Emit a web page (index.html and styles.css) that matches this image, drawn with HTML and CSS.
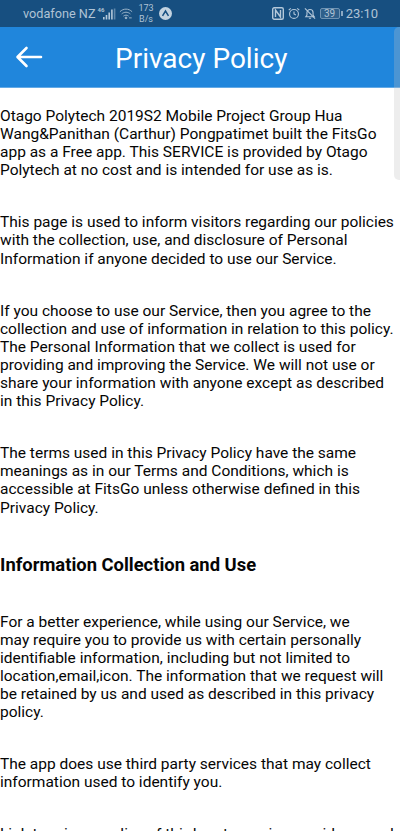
FILE: index.html
```html
<!DOCTYPE html>
<html lang="en">
<head>
    <meta charset="UTF-8">
    <meta name="viewport" content="width=device-width, initial-scale=1.0">
    <title>Privacy Policy</title>
    <link rel="stylesheet" href="styles.css">
</head>
<body>
    <div class="status-bar">
        <div class="status-left">
            <span class="carrier">vodafone NZ</span>
            <span class="net-type">46</span>
            <svg class="signal" width="13" height="12" viewBox="0 0 13 12">
                <rect x="0" y="9" width="1.600" height="2.500" fill="#b4c8da"/>
                <rect x="2.700" y="7" width="1.600" height="4.500" fill="#b4c8da"/>
                <rect x="5.400" y="4.500" width="1.600" height="7" fill="#b4c8da"/>
                <rect x="8.100" y="1.500" width="1.600" height="10" fill="#b4c8da"/>
                <rect x="10.800" y="0.500" width="1.600" height="11" fill="#5f87aa"/>
            </svg>
            <svg class="wifi" width="14" height="13" viewBox="0 0 16 14" fill="none" stroke="#9db6ca" stroke-width="1.100">
                <path d="M1 5c4-4 10-4 14 0"/>
                <path d="M3 7.500c3-2.600 7-2.600 10 0"/>
                <path d="M5 10c2-1.500 4-1.500 6 0"/>
                <circle cx="8" cy="12" r="1" fill="#9db6ca"/>
                <path d="M11.500 12h3"/>
            </svg>
            <span class="speed">173<br>B/s</span>
            <svg class="app-badge" width="13" height="13" viewBox="0 0 14 14">
                <circle cx="7" cy="7" r="7" fill="#c3d3e0"/>
                <path d="M3.800 9.500 7 4.300l3.200 5.200" fill="none" stroke="#174f80" stroke-width="1.600"/>
            </svg>
        </div>
        <div class="status-right">
            <svg width="12" height="13" viewBox="0 0 12 13" fill="none" stroke="#b4c8da" stroke-width="1.400">
                <rect x="0.700" y="0.700" width="10.600" height="11.600" rx="1.500"/>
                <path d="M3.500 10V3l5 7V3"/>
            </svg>
            <svg width="12" height="13" viewBox="0 0 13 13" fill="none" stroke="#b4c8da" stroke-width="1.200">
                <circle cx="6.500" cy="7" r="4.800"/>
                <path d="M6.500 4.200V7l2 1.200M0.800 2.800 3 .9M12.200 2.800 10 .9"/>
            </svg>
            <svg width="12" height="13" viewBox="0 0 13 13" fill="none" stroke="#b4c8da" stroke-width="1.200">
                <path d="M2 10h9L9.800 8.300V5.500a3.300 3.300 0 0 0-6.600 0v2.800z"/>
                <path d="M5.300 11.700h2.400M1 1l11 11"/>
            </svg>
            <div class="battery"><span class="battery-level">39</span></div>
            <span class="clock">23:10</span>
        </div>
    </div>

    <header class="app-bar">
        <svg class="back" width="28" height="24" viewBox="0 0 28 24" fill="none" stroke="#fff" stroke-width="2.600" stroke-linecap="round" stroke-linejoin="round">
            <path d="M26 12H3M11.500 3 2.500 12l9 9"/>
        </svg>
        <h1>Privacy Policy</h1>
    </header>

    <div class="scroll-thumb"></div>

    <main class="policy">
        <p>Otago Polytech 2019S2 Mobile Project Group Hua Wang&amp;Panithan (Carthur) Pongpatimet built the FitsGo app as a Free app. This SERVICE is provided by Otago Polytech at no cost and is intended for use as is.</p>
        <p>This page is used to inform visitors regarding our policies with the collection, use, and disclosure of Personal Information if anyone decided to use our Service.</p>
        <p>If you choose to use our Service, then you agree to the collection and use of information in relation to this policy. The Personal Information that we collect is used for providing and improving the Service. We will not use or share your information with anyone except as described in this Privacy Policy.</p>
        <p>The terms used in this Privacy Policy have the same meanings as in our Terms and Conditions, which is accessible at FitsGo unless otherwise defined in this Privacy Policy.</p>
        <h2>Information Collection and Use</h2>
        <p>For a better experience, while using our Service, we<br>may require you to provide us with certain personally identifiable information, including but not limited to location,email,icon. The information that we request will be retained by us and used as described in this privacy policy.</p>
        <p>The app does use third party services that may collect information used to identify you.</p>
        <p>Link to privacy policy of third party service providers used by the app</p>
    </main>
</body>
</html>
```

FILE: styles.css
```css
body {
    margin: 0;
    height: 831px;
    overflow: hidden;
    position: relative;
    background: #fff;
    color: #050505;
    font-family: Roboto, "Liberation Sans", sans-serif;
}

.status-bar {
    height: 27px;
    background: #174f80;
    color: #afc3d5;
    display: flex;
    justify-content: space-between;
    align-items: center;
    padding: 0 22px 0 23px;
    font-size: 12.700px;
}

.status-left, .status-right {
    display: flex;
    align-items: center;
}

.net-type {
    font-size: 6px;
    font-weight: 700;
    margin: -8px 0 0 2px;
}

.signal {
    margin-left: -1px;
}

.wifi {
    margin-left: 3px;
}

.speed {
    font-size: 9px;
    line-height: 11px;
    text-align: center;
    margin-left: 5px;
}

.app-badge {
    margin-left: 5px;
}

.status-right {
    gap: 4px;
}

.battery {
    width: 18px;
    height: 9px;
    background: #2f608b;
    border: 1px solid #6f94b4;
    border-radius: 2px;
    display: flex;
    align-items: center;
    justify-content: center;
    position: relative;
}

.battery::after {
    content: "";
    position: absolute;
    right: -4px;
    top: 2px;
    width: 2px;
    height: 5px;
    background: #8ba9c3;
}

.battery-level {
    font-size: 10px;
}

.clock {
    font-size: 13px;
    margin-left: 2px;
}

.app-bar {
    height: 60px;
    background: #2086dc;
    border-bottom: 1px solid #64aae6;
    display: flex;
    align-items: center;
}

.back {
    margin-left: 15px;
    flex-shrink: 0;
}

.app-bar h1 {
    margin: 3px 0 0 72px;
    color: #fff;
    font-size: 28px;
    font-weight: 400;
}

.scroll-thumb {
    position: absolute;
    right: 0;
    top: 27px;
    width: 6px;
    height: 153px;
    border-radius: 5px 0 0 5px;
    background: rgba(190, 190, 190, 0.28);
}

.policy {
    padding: 19px 0 0;
    font-size: 15.500px;
    line-height: 18.100px;
}

.policy p {
    margin: 0 0 34px;
}

.policy h2 {
    margin: 37px 0;
    font-size: 18.400px;
    font-weight: 700;
    line-height: 22px;
}
```
